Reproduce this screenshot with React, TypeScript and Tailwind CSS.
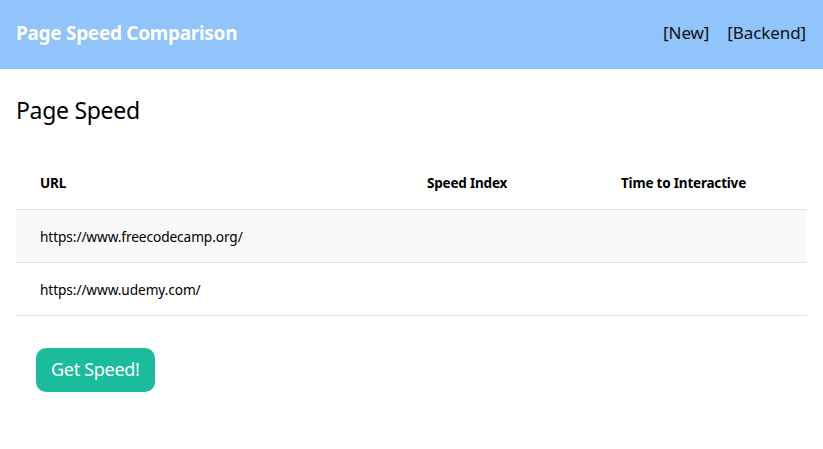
import React from "react";

const rows = ["https://www.freecodecamp.org/", "https://www.udemy.com/"];

export default function App() {
  return (
    <div className="min-h-screen bg-white font-['Noto_Sans',sans-serif] text-black">
      <header className="flex h-[69px] items-center justify-between bg-[#90c4fb] pb-[3px] pl-4 pr-[17px]">
        <h1 className="text-[19px] font-bold tracking-[-0.3px] text-white">Page Speed Comparison</h1>
        <nav className="flex gap-[18px] text-[17px] tracking-[-0.1px] text-[#111]">
          <a href="#">[New]</a>
          <a href="#">[Backend]</a>
        </nav>
      </header>

      <main className="px-4">
        <h2 className="mt-[24px] text-[23px] leading-[34px] tracking-[-0.3px]">Page Speed</h2>

        <table className="mt-[27px] w-full border-collapse text-[13.7px] tracking-[-0.1px]">
          <thead>
            <tr className="h-[55px] border-b border-[#e4e4e4] text-[13.5px] tracking-[-0.2px]">
              <th className="w-[387px] pl-6 pt-1 text-left font-bold">URL</th>
              <th className="w-[194px] pl-6 pt-1 text-left font-bold">Speed Index</th>
              <th className="pl-6 pt-1 text-left font-bold">Time to Interactive</th>
            </tr>
          </thead>
          <tbody>
            {rows.map((url, i) => (
              <tr
                key={url}
                className={`h-[53px] border-b border-[#e4e4e4] ${i === 0 ? "bg-[#f9f9f9]" : "bg-white"}`}
              >
                <td className="pl-6 pt-1">{url}</td>
                <td className="pl-6 pt-1"></td>
                <td className="pl-6 pt-1"></td>
              </tr>
            ))}
          </tbody>
        </table>

        <button className="ml-5 mt-[32px] h-[44px] rounded-[10px] bg-[#1abc9c] px-[15px] text-[18px] tracking-[-0.3px] text-white">
          Get Speed!
        </button>
      </main>
    </div>
  );
}
